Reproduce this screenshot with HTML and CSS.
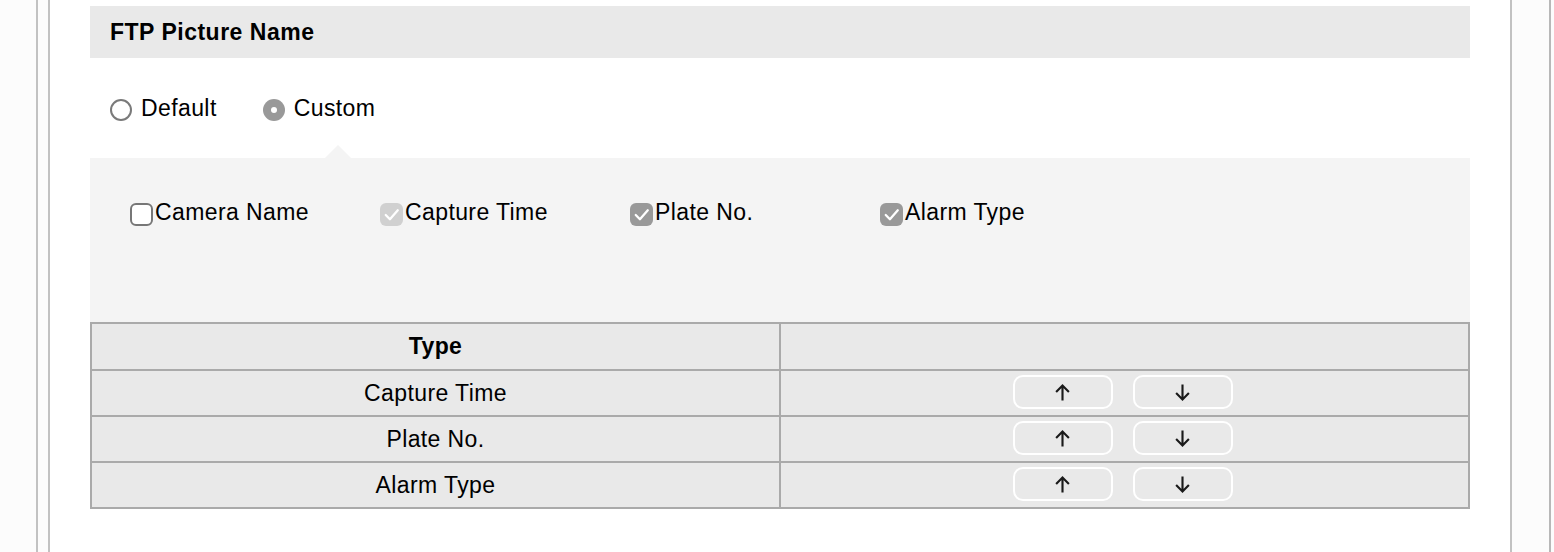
FILE: index.html
```html
<!DOCTYPE html>
<html>
<head>
    <title>FTP Picture Name</title>
    <link rel="stylesheet" href="styles.css">
</head>
<body>
    <div id="page_frame">
        <div id="settings_content">

            <div class="section_title">FTP Picture Name</div>

            <div class="radio_row">
                <label class="radio_item"><span class="radio"></span>Default</label>
                <label class="radio_item"><span class="radio checked"></span>Custom</label>
            </div>

            <div class="custom_panel">
                <div class="check_row">
                    <label class="check_item"><span class="checkbox"></span>Camera Name</label>
                    <label class="check_item"><span class="checkbox disabled"><svg viewBox="0 0 22 22"><path d="M5.5 11.5l4 4L17 7" /></svg></span>Capture Time</label>
                    <label class="check_item"><span class="checkbox checked"><svg viewBox="0 0 22 22"><path d="M5.5 11.5l4 4L17 7" /></svg></span>Plate No.</label>
                    <label class="check_item"><span class="checkbox checked"><svg viewBox="0 0 22 22"><path d="M5.5 11.5l4 4L17 7" /></svg></span>Alarm Type</label>
                </div>
            </div>

            <table class="order_table">
                <tr>
                    <th>Type</th>
                    <th></th>
                </tr>
                <tr>
                    <td>Capture Time</td>
                    <td>
                        <div class="btn_group">
                            <button class="move_btn"><svg viewBox="0 0 14 16"><path d="M7 15.5V1.5M1 7.5l6-6 6 6" /></svg></button>
                            <button class="move_btn"><svg viewBox="0 0 14 16"><path d="M7 .5v14M1 8.5l6 6 6-6" /></svg></button>
                        </div>
                    </td>
                </tr>
                <tr>
                    <td>Plate No.</td>
                    <td>
                        <div class="btn_group">
                            <button class="move_btn"><svg viewBox="0 0 14 16"><path d="M7 15.5V1.5M1 7.5l6-6 6 6" /></svg></button>
                            <button class="move_btn"><svg viewBox="0 0 14 16"><path d="M7 .5v14M1 8.5l6 6 6-6" /></svg></button>
                        </div>
                    </td>
                </tr>
                <tr>
                    <td>Alarm Type</td>
                    <td>
                        <div class="btn_group">
                            <button class="move_btn"><svg viewBox="0 0 14 16"><path d="M7 15.5V1.5M1 7.5l6-6 6 6" /></svg></button>
                            <button class="move_btn"><svg viewBox="0 0 14 16"><path d="M7 .5v14M1 8.5l6 6 6-6" /></svg></button>
                        </div>
                    </td>
                </tr>
            </table>

        </div>
    </div>
</body>
</html>
```

FILE: styles.css
```css
body {
    margin:0;
    background:#fcfcfc;
    font-family:"Liberation Sans", Arial, sans-serif;
    font-size:23px;
    letter-spacing:0.4px;
    color:#000;
}

#page_frame {
    box-sizing:border-box;
    width:1515px;
    min-height:552px;
    margin-left:36px;
    padding-left:10px;
    border-left:2px solid #c2c2c2;
    border-right:2px solid #b8b8b8;
}

#settings_content {
    box-sizing:border-box;
    width:1464px;
    min-height:552px;
    padding:6px 40px 0 40px;
    background:#fff;
    border-left:2px solid #c2c2c2;
    border-right:2px solid #c2c2c2;
}

.section_title {
    height:52px;
    line-height:52px;
    padding-left:20px;
    background:#e9e9e9;
    font-weight:bold;
    letter-spacing:0.5px;
}

/* radio buttons */
.radio_row {
    display:flex;
    align-items:center;
    gap:46px;
    height:100px;
    padding-left:20px;
}

.radio_item {
    display:flex;
    align-items:center;
    gap:9px;
}

.radio {
    box-sizing:border-box;
    width:22px;
    height:22px;
    border-radius:50%;
    border:2px solid #7a7a7a;
    background:#fff;
    position:relative;
    top:2px;
}

.radio.checked {
    border:none;
    background:#999;
}

    .radio.checked::after {
        content:"";
        position:absolute;
        left:8px;
        top:8px;
        width:6px;
        height:6px;
        border-radius:50%;
        background:#fff;
    }

/* custom panel */
.custom_panel {
    position:relative;
    height:164px;
    padding:41px 0 0 40px;
    box-sizing:border-box;
    background:#f4f4f4;
}

    .custom_panel::before {
        content:"";
        position:absolute;
        left:235px;
        top:-13px;
        border-left:13px solid transparent;
        border-right:13px solid transparent;
        border-bottom:13px solid #f4f4f4;
    }

.check_row {
    display:flex;
}

.check_item {
    display:flex;
    align-items:center;
    gap:2px;
    width:250px;
}

.checkbox {
    box-sizing:border-box;
    width:23px;
    height:23px;
    border-radius:6px;
    border:2px solid #777;
    background:#fff;
    position:relative;
    top:2px;
}

.checkbox.checked {
    border:none;
    background:#999;
}

.checkbox.disabled {
    border:none;
    background:#d0d0d0;
}

    .checkbox svg {
        display:block;
        width:23px;
        height:23px;
        fill:none;
        stroke:#fff;
        stroke-width:2.2;
        stroke-linecap:round;
        stroke-linejoin:round;
    }

/* order table */
.order_table {
    width:100%;
    border-collapse:collapse;
    background:#e9e9e9;
}

    .order_table th,
    .order_table td {
        width:50%;
        height:44px;
        padding:0;
        border:2px solid #aaa;
        text-align:center;
    }

    .order_table th {
        height:45px;
        font-weight:bold;
    }

.btn_group {
    display:flex;
    justify-content:center;
    gap:20px;
    padding-right:4px;
}

.move_btn {
    box-sizing:border-box;
    width:100px;
    height:34px;
    border:2px solid #fff;
    border-radius:10px;
    background:transparent;
    display:flex;
    align-items:center;
    justify-content:center;
    padding:0;
    margin-top:-2px;
}

    .move_btn svg {
        width:15px;
        height:17px;
        fill:none;
        stroke:#1a1a1a;
        stroke-width:2;
    }
```
